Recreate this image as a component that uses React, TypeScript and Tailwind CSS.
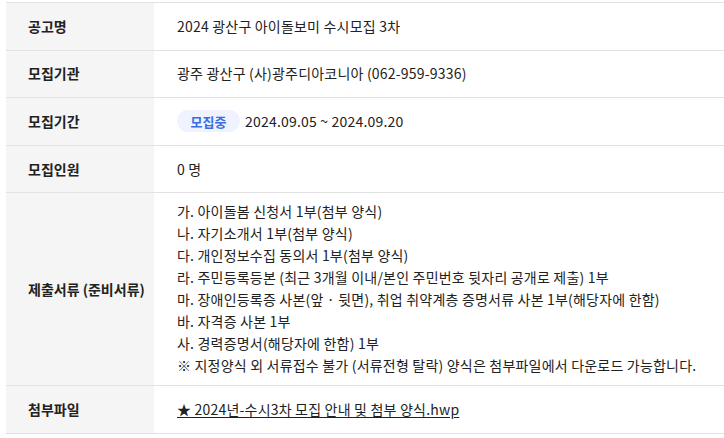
const font = { fontFamily: '"Noto Sans CJK KR", "Noto Sans", sans-serif' };

type Row = { label: string; content: React.ReactNode; tall?: boolean };

const docs = [
  '가. 아이돌봄 신청서 1부(첨부 양식)',
  '나. 자기소개서 1부(첨부 양식)',
  '다. 개인정보수집 동의서 1부(첨부 양식)',
  '라. 주민등록등본 (최근 3개월 이내/본인 주민번호 뒷자리 공개로 제출) 1부',
  '마. 장애인등록증 사본(앞 · 뒷면), 취업 취약계층 증명서류 사본 1부(해당자에 한함)',
  '바. 자격증 사본 1부',
  '사. 경력증명서(해당자에 한함) 1부',
  '※ 지정양식 외 서류접수 불가 (서류전형 탈락) 양식은 첨부파일에서 다운로드 가능합니다.',
];

const rows: Row[] = [
  { label: '공고명', content: '2024 광산구 아이돌보미 수시모집 3차' },
  { label: '모집기관', content: '광주 광산구 (사)광주디아코니아 (062-959-9336)' },
  {
    label: '모집기간',
    content: (
      <div className="flex items-center gap-[5px]">
        <span className="inline-flex h-[22px] w-[63px] items-center justify-center rounded-full bg-[#eef3ff] text-[13px] font-bold tracking-normal text-[#3a6de0]">
          모집중
        </span>
        <span>2024.09.05 ~ 2024.09.20</span>
      </div>
    ),
  },
  { label: '모집인원', content: '0 명' },
  {
    label: '제출서류 (준비서류)',
    tall: true,
    content: (
      <div className="flex flex-col">
        {docs.map((d) => (
          <div key={d} className="leading-[22px]">{d}</div>
        ))}
      </div>
    ),
  },
  {
    label: '첨부파일',
    content: <a className="underline underline-offset-2">★ 2024년-수시3차 모집 안내 및 첨부 양식.hwp</a>,
  },
];

export default function App() {
  return (
    <main className="min-h-screen bg-white pt-[2px] pl-[6px]" style={font}>
      <div className="border-t border-[#e2e2e2] text-[14px] text-[#222]">
        {rows.map((r) => (
          <div key={r.label} className="flex border-b border-[#e2e2e2]">
            <div className="flex w-[148px] shrink-0 items-center bg-[#f5f5f5] pl-[22px] font-bold">
              {r.label}
            </div>
            <div
              className={`flex flex-1 items-center pl-[23px] tracking-[0.2px] ${
                r.tall ? 'pt-[7px] pb-[9px]' : 'min-h-[46.6px]'
              }`}
            >
              {r.content}
            </div>
          </div>
        ))}
      </div>
    </main>
  );
}
